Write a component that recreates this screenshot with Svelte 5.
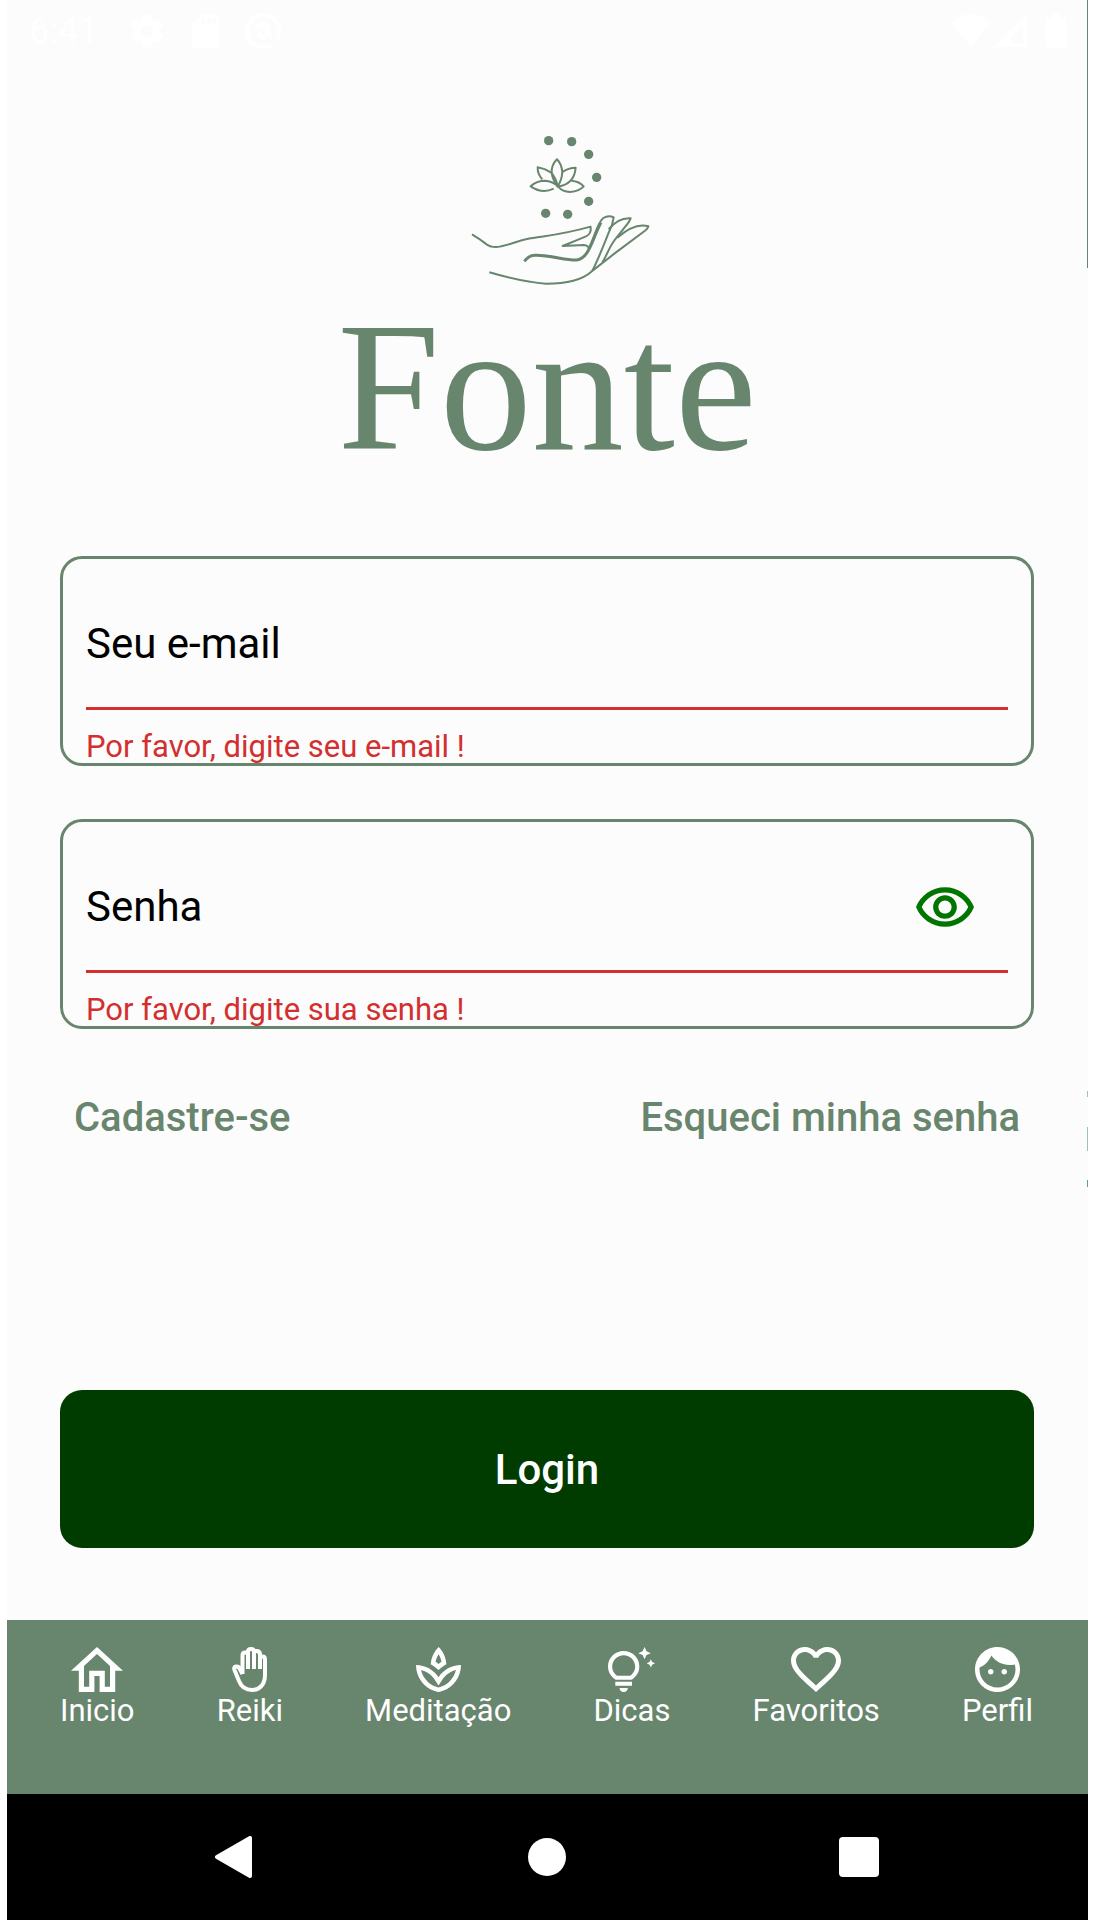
<script>
  let email = $state('');
  let password = $state('');
  let visible = $state(false);

  const tabs = [
    {
      label: 'Inicio', box: '2 3 20 17', width: 52,
      path: 'M12 5.69l5 4.5V18h-2v-6H9v6H7v-7.81l5-4.5M12 3L2 12h3v8h6v-6h2v6h6v-8h3L12 3z'
    },
    { label: 'Reiki', box: '0 0 35 45', width: 35, hand: true },
    {
      label: 'Meditação', box: '2 2 20 20', width: 45,
      path: 'M15.49 9.63c-.18-2.79-1.31-5.51-3.43-7.63-2.14 2.14-3.32 4.86-3.55 7.63 1.28.68 2.46 1.56 3.49 2.63 1.03-1.06 2.21-1.94 3.49-2.63zm-3.44-4.44c.63 1.03 1.07 2.18 1.3 3.38-.47.3-.91.63-1.34.98-.42-.34-.87-.67-1.33-.97.25-1.2.71-2.35 1.37-3.39zM12 15.45C9.85 12.17 6.18 10 2 10c0 5.32 3.36 9.82 8.03 11.49.63.23 1.29.4 1.97.51.68-.12 1.33-.29 1.97-.51C18.64 19.82 22 15.32 22 10c-4.18 0-7.85 2.17-10 5.45zm1.32 4.15c-.44.15-.88.27-1.33.37-.44-.09-.87-.21-1.28-.36-3.29-1.18-5.7-3.99-6.45-7.35 1.1.26 2.15.71 3.12 1.33l-.02.01c.13.09.26.18.39.25l.07.04c.99.72 1.84 1.61 2.51 2.65L12 19.1l1.67-2.55c.69-1.05 1.55-1.95 2.53-2.66l.07-.05c.09-.05.18-.11.27-.17l-.01-.02c.98-.65 2.07-1.13 3.21-1.4-.75 3.37-3.15 6.18-6.42 7.35z'
    },
    {
      label: 'Dicas', box: '1.5 0 22.5 22', width: 47,
      path: 'M7 20h4c0 1.1-.9 2-2 2s-2-.9-2-2zm-2-1h8v-2H5v2zm11.5-9.5c0 3.82-2.66 5.86-3.77 6.5H5.27c-1.11-.64-3.77-2.68-3.77-6.5C1.5 5.36 4.86 2 9 2s7.5 3.36 7.5 7.5zm-2 0C14.5 6.47 12.03 4 9 4S3.5 6.47 3.5 9.5c0 2.47 1.49 3.89 2.35 4.5h6.3c.86-.61 2.35-2.03 2.35-4.5zm6.87-2.13L20 8l1.37.63L22 10l.63-1.37L24 8l-1.37-.63L22 6l-.63 1.37zM19 6l.94-2.06L22 3l-2.06-.94L19 0l-.94 2.06L16 3l2.06.94L19 6z'
    },
    {
      label: 'Favoritos', box: '2 3 20 18.35', width: 50,
      path: 'M16.5 3c-1.74 0-3.41.81-4.5 2.09C10.91 3.81 9.24 3 7.5 3 4.42 3 2 5.42 2 8.5c0 3.78 3.4 6.86 8.55 11.54L12 21.35l1.45-1.32C18.6 15.36 22 12.28 22 8.5 22 5.42 19.58 3 16.5 3zm-4.4 15.55l-.1.1-.1-.1C7.14 14.24 4 11.39 4 8.5 4 6.5 5.5 5 7.5 5c1.54 0 3.04.99 3.57 2.36h1.87C13.46 5.99 14.96 5 16.5 5c2 0 3.5 1.5 3.5 3.5 0 2.89-3.14 5.74-7.9 10.05z'
    },
    {
      label: 'Perfil', box: '2 2 20 20', width: 45,
      path: 'M9 11.75c-.69 0-1.25.56-1.25 1.25s.56 1.25 1.25 1.25 1.25-.56 1.25-1.25-.56-1.25-1.25-1.25zm6 0c-.69 0-1.25.56-1.25 1.25s.56 1.25 1.25 1.25 1.25-.56 1.25-1.25-.56-1.25-1.25-1.25zM12 2C6.48 2 2 6.48 2 12s4.48 10 10 10 10-4.48 10-10S17.52 2 12 2zm0 18c-4.41 0-8-3.59-8-8 0-.29.02-.58.05-.86 2.36-1.05 4.23-2.98 5.21-5.37C11.07 8.33 14.05 10 17.42 10c.78 0 1.53-.09 2.25-.26.21.71.33 1.47.33 2.26 0 4.41-3.59 8-8 8z'
    }
  ];
</script>

<div class="screen">
  <div class="peek" aria-hidden="true"></div>

  <header class="status">
    <span class="time">6:41</span>
    <svg class="gear" viewBox="2 2 20 20" width="34" height="34" aria-hidden="true">
      <path d="M19.14 12.94c.04-.3.06-.61.06-.94 0-.32-.02-.64-.07-.94l2.03-1.58c.18-.14.23-.41.12-.61l-1.92-3.32c-.12-.22-.37-.29-.59-.22l-2.39.96c-.5-.38-1.03-.7-1.62-.94l-.36-2.54c-.04-.24-.24-.41-.48-.41h-3.84c-.24 0-.43.17-.47.41l-.36 2.54c-.59.24-1.13.57-1.62.94l-2.39-.96c-.22-.08-.47 0-.59.22L2.74 8.87c-.12.21-.08.47.12.61l2.03 1.58c-.05.3-.09.63-.09.94s.02.64.07.94l-2.03 1.58c-.18.14-.23.41-.12.61l1.92 3.32c.12.22.37.29.59.22l2.39-.96c.5.38 1.03.7 1.62.94l.36 2.54c.05.24.24.41.48.41h3.84c.24 0 .44-.17.47-.41l.36-2.54c.59-.24 1.13-.56 1.62-.94l2.39.96c.22.08.47 0 .59-.22l1.92-3.32c.12-.22.07-.47-.12-.61l-2.01-1.58zM12 15.6c-1.98 0-3.6-1.62-3.6-3.6s1.62-3.6 3.6-3.6 3.6 1.62 3.6 3.6-1.62 3.6-3.6 3.6z" />
    </svg>
    <svg class="card" viewBox="4 2 16 20" width="27" height="34" aria-hidden="true">
      <path d="M18 2h-8L4.02 8 4 20c0 1.1.9 2 2 2h12c1.1 0 2-.9 2-2V4c0-1.1-.9-2-2-2zm-6 6h-2V4h2v4zm3 0h-2V4h2v4zm3 0h-2V4h2v4z" />
    </svg>
    <svg viewBox="0 0 36 36" width="36" height="36" aria-hidden="true">
      <path d="M32 26A16 16 0 1 0 26 32" fill="none" stroke="#fff" stroke-width="4" />
      <path d="M9 18a9 9 0 0 1 17-4v12l-11-11zM11 21l4-3 8 8a9 9 0 0 1-12-5z" />
    </svg>
    <span class="spacer"></span>
    <svg viewBox="0 0 40 34" width="40" height="34" aria-hidden="true"><path d="M0 9Q20-9 40 9L20 33z" /></svg>
    <svg class="signal" viewBox="0 0 34 34" width="34" height="34" aria-hidden="true"><path fill-rule="evenodd" d="M34 0v33H1zM30 10L18 22v8h12z" /></svg>
    <svg class="battery" viewBox="0 0 20 34" width="20" height="34" aria-hidden="true"><path d="M6 0h8v4h4q2 0 2 2v26q0 2-2 2H2q-2 0-2-2V6q0-2 2-2h4z" /></svg>
  </header>

  <main>
    <svg class="logo" viewBox="328 130 440 370" width="440" height="370" role="img" aria-label="Fonte">
      <g transform="translate(460 120) scale(.3333)">
        <g class="dots">
          <circle cx="269" cy="62" r="14" /><circle cx="338" cy="65" r="14" />
          <circle cx="389" cy="103" r="14" /><circle cx="413" cy="172" r="14" />
          <circle cx="389" cy="244" r="14" /><circle cx="326" cy="283" r="14" />
          <circle cx="260" cy="280" r="14" />
        </g>
        <g class="lines">
          <path d="M294 118Q277 135 278 158Q281 180 296 200Q309 178 310 156Q308 132 294 118z" />
          <path d="M250 178Q235 161 236 142Q257 145 277 158Q292 177 296 198" />
          <path d="M311 156Q328 143 350 143Q348 170 333 184Q320 197 299 199" />
          <path d="M284 206Q250 223 215 199Q232 182 260 182Q284 184 300 202Q310 214 333 216Q362 213 374 199Q362 184 337 182" />
          <path d="M39 343Q61 356 80 371Q92 381 111 381C135 381 172 363 215 355C270 346 305 345 395 320V332Q392 347 374 352L311 378L374 375Q389 376 390 387" />
          <path stroke-width="9" d="M196 424Q211 405 230 406C270 405 325 422 353 420C391 415 398 360 426 308" />
          <path d="M390 385C408 349 415 307 433 294Q449 284 464 292Q461 316 450 336C433 378 416 423 400 452" />
          <path d="M449 328C468 305 487 293 515 295Q511 306 503 315L465 363C449 385 441 412 430 427" />
          <path d="M475 353C505 327 538 309 568 319Q565 327 560 331L470 398L397 455C359 489 298 491 261 491C205 488 153 475 91 457" />
        </g>
      </g>
      <text x="548" y="449" text-anchor="middle">Fonte</text>
    </svg>

    <form onsubmit={(e) => e.preventDefault()} novalidate>
      <div class="field">
        <div class="control">
          <label for="email">{email ? '' : 'Seu e-mail'}</label>
          <input id="email" type="email" bind:value={email} aria-describedby="email-error" />
        </div>
        <p class="error" id="email-error">Por favor, digite seu e-mail !</p>
      </div>

      <div class="field">
        <div class="control">
          <label for="password">{password ? '' : 'Senha'}</label>
          <input id="password" type={visible ? 'text' : 'password'} bind:value={password} aria-describedby="password-error" />
          <button class="eye" type="button" aria-label="Mostrar senha" onclick={() => (visible = !visible)}>
            <svg viewBox="1 4 22 15" width="58" height="40" aria-hidden="true">
              <path d="M12 6c3.79 0 7.17 2.13 8.82 5.5C19.17 14.87 15.79 17 12 17s-7.17-2.13-8.82-5.5C4.83 8.13 8.21 6 12 6m0-2C7 4 2.73 7.11 1 11.5 2.73 15.89 7 19 12 19s9.27-3.11 11-7.5C21.27 7.11 17 4 12 4zm0 5c1.38 0 2.5 1.12 2.5 2.5S13.38 14 12 14s-2.5-1.12-2.5-2.5S10.62 9 12 9m0-2c-2.48 0-4.5 2.02-4.5 4.5S9.52 16 12 16s4.5-2.02 4.5-4.5S14.48 7 12 7z" />
            </svg>
          </button>
        </div>
        <p class="error" id="password-error">Por favor, digite sua senha !</p>
      </div>

      <div class="links">
        <a href="#cadastro">Cadastre-se</a>
        <a href="#senha">Esqueci minha senha</a>
      </div>

      <button class="login" type="submit">Login</button>
    </form>
  </main>

  <nav class="tabs">
    {#each tabs as tab}
      <a href="#{tab.label}">
        <svg viewBox={tab.box} width={tab.width} height="45" preserveAspectRatio="none" aria-hidden="true">
          {#if tab.hand}
            <path class="hand" d="M10.500 27V8.500Q10.500 5.500 13 5.500Q16 5.500 16 8V22M16 8V4.500Q16 2 19 2Q22 2 22 4.500V22M22 6.500Q22 4 24.500 4Q28 4 28 7.500V22M28 12Q28 9.500 30.500 9.500Q33 9.500 33 12.500V28C33 37 28 43 20 43C12.500 43 9 39 7 34L2.500 23Q1.500 20 4 19.500Q6.500 19 7.500 21.500L10.500 27" />
          {:else}
            <path d={tab.path} />
          {/if}
        </svg>
        <span>{tab.label}</span>
      </a>
    {/each}
  </nav>

  <footer class="system">
    <button aria-label="Voltar">
      <svg viewBox="0 0 42 42" width="42" height="42" aria-hidden="true"><path d="M3 21L36 2v38z" stroke="#fff" stroke-width="4" stroke-linejoin="round" /></svg>
    </button>
    <button aria-label="Tela inicial">
      <svg viewBox="0 0 42 42" width="42" height="42" aria-hidden="true"><circle cx="21" cy="21" r="19" /></svg>
    </button>
    <button aria-label="Recentes">
      <svg viewBox="0 0 42 42" width="42" height="42" aria-hidden="true"><rect x="1" y="1" width="40" height="40" rx="4" /></svg>
    </button>
  </footer>
</div>

<style>
  :global(body) {
    background: #fff;
  }

  .screen {
    --green: #68856d;
    position: relative;
    display: flex;
    flex-direction: column;
    min-height: 100vh;
    margin: 0 5px 0 7px;
    background: #fcfcfc;
    font-family: Roboto, 'Liberation Sans', sans-serif;
    color: #000;
  }

  svg {
    display: block;
    flex: none;
    fill: currentColor;
  }

  button {
    display: grid;
    place-items: center;
    margin: 0;
    padding: 0;
    border: 0;
    background: none;
    font: inherit;
    color: inherit;
  }

  a {
    color: inherit;
    text-decoration: none;
  }

  /* Sliver of the neighbouring page at the right edge */
  .peek {
    position: absolute;
    top: 0;
    right: 0;
    width: 1px;
    height: 1188px;
    background: linear-gradient(
      var(--green) 268px, transparent 268px 1091px,
      #9cc2bf 1091px 1097px, transparent 1097px 1127px,
      #9cc2bf 1127px 1151px, transparent 1151px 1180px,
      #5b9ea6 1180px 1187px, transparent 1187px
    );
  }

  .status {
    display: flex;
    align-items: center;
    height: 62px;
    padding: 0 22px;
    color: #fff;
  }

  .time {
    font-size: 36px;
    line-height: 42px;
  }

  .gear {
    margin-left: 32px;
  }

  .card {
    margin: 0 26px 0 28px;
  }

  .spacer {
    flex: 1;
  }

  .battery {
    margin-left: 19px;
  }

  .signal {
    margin-left: 2px;
  }

  main {
    flex: 1;
    padding: 68px 54px 71px 53px;
  }

  .logo {
    margin: 0 auto 56px;
    color: var(--green);
  }

  .logo text {
    font-family: 'Liberation Serif', serif;
    font-size: 184px;
  }

  .lines {
    fill: none;
    stroke: currentColor;
    stroke-width: 6;
    stroke-linejoin: round;
  }

  .field {
    box-sizing: border-box;
    margin-bottom: 53px;
    padding: 21px 23px 0;
    border: 3px solid var(--green);
    border-radius: 22px;
  }

  .control {
    display: grid;
    grid-template-columns: 1fr auto;
    align-items: center;
    height: 127px;
    border-bottom: 3px solid #d32f2f;
  }

  .control label,
  .control input {
    grid-area: 1 / 1;
    font-size: 42px;
    line-height: 48px;
  }

  .control input {
    min-width: 0;
    padding: 0;
    border: 0;
    outline: 0;
    background: none;
    font-family: inherit;
  }

  .eye {
    margin-right: 34px;
    color: #007500;
  }

  .error {
    margin: 21px 0 0;
    font-size: 31px;
    line-height: 32px;
    color: #d32f2f;
  }

  .links {
    display: flex;
    justify-content: space-between;
    margin-bottom: 248px;
    padding: 12px 14px 0;
    font-size: 40px;
    font-weight: 500;
    line-height: 48px;
    color: var(--green);
  }

  .login {
    width: 100%;
    height: 158px;
    border-radius: 22px;
    background: #003c00;
    font-size: 42px;
    font-weight: 500;
    color: #fff;
  }

  .tabs {
    display: flex;
    justify-content: space-between;
    height: 147px;
    padding: 27px 55px 0 53px;
    background: var(--green);
    font-size: 31px;
    line-height: 38px;
    color: #fff;
  }

  .tabs a {
    display: flex;
    flex-direction: column;
    align-items: center;
  }

  .hand {
    fill: none;
    stroke: currentColor;
    stroke-width: 4;
    stroke-linejoin: round;
  }

  .system {
    display: grid;
    grid-template-columns: repeat(3, 312px);
    justify-content: center;
    height: 126px;
    padding-right: 2px;
    background: #000;
    color: #fff;
  }
</style>
